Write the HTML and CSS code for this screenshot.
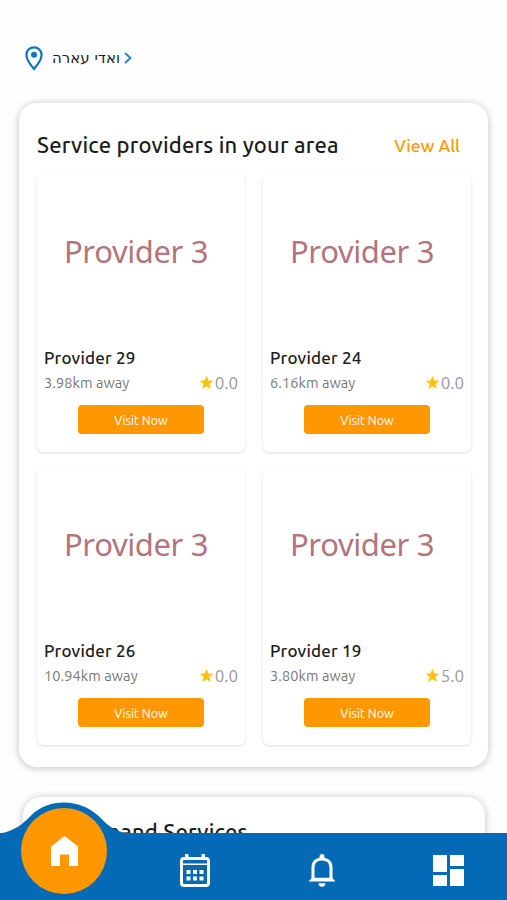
FILE: index.html
```html
<!DOCTYPE html>
<html lang="en">
<head>
<meta charset="UTF-8">
<meta name="viewport" content="width=device-width, initial-scale=1.0">
<title>Home</title>
<link rel="stylesheet" href="styles.css">
</head>
<body>
  <svg class="sprite" width="0" height="0">
    <symbol id="star" viewBox="0 0 24 24"><path d="M12 18 18.8 22.500l-2.200-8L23 9.200l-8-.5L12 1 9 8.700l-8 .5 6.400 5.300-2.200 8z"/></symbol>
  </svg>

  <header class="location">
    <svg class="pin" viewBox="0 0 18 25">
      <path d="M9 1.3C4.7 1.3 1.4 4.6 1.4 8.8 1.4 14.3 9 23 9 23s7.6-8.7 7.6-14.2c0-4.2-3.3-7.5-7.6-7.5z" fill="none" stroke="#0f75bd" stroke-width="2.2"/>
      <circle cx="9" cy="8.8" r="3" fill="#0f75bd"/>
    </svg>
    <span class="place" dir="rtl">ואדי עארה</span>
    <svg class="chevron" viewBox="0 0 8 12"><path d="M1 1l5.5 5L1 11" fill="none" stroke="#1d7fc4" stroke-width="1.7"/></svg>
  </header>

  <section class="panel">
    <div class="panel-head">
      <h2>Service providers in your area</h2>
      <a class="view-all" href="#">View All</a>
    </div>
    <div class="grid">
      <div class="card">
        <div class="photo"><span>Provider 3</span></div>
        <h3>Provider 29</h3>
        <div class="info">
          <span class="distance">3.98km away</span>
          <span class="rating"><svg class="star"><use href="#star"/></svg>0.0</span>
        </div>
        <button class="visit">Visit Now</button>
      </div>
      <div class="card">
        <div class="photo"><span>Provider 3</span></div>
        <h3>Provider 24</h3>
        <div class="info">
          <span class="distance">6.16km away</span>
          <span class="rating"><svg class="star"><use href="#star"/></svg>0.0</span>
        </div>
        <button class="visit">Visit Now</button>
      </div>
      <div class="card">
        <div class="photo"><span>Provider 3</span></div>
        <h3>Provider 26</h3>
        <div class="info">
          <span class="distance">10.94km away</span>
          <span class="rating"><svg class="star"><use href="#star"/></svg>0.0</span>
        </div>
        <button class="visit">Visit Now</button>
      </div>
      <div class="card">
        <div class="photo"><span>Provider 3</span></div>
        <h3>Provider 19</h3>
        <div class="info">
          <span class="distance">3.80km away</span>
          <span class="rating"><svg class="star"><use href="#star"/></svg>5.0</span>
        </div>
        <button class="visit">Visit Now</button>
      </div>
    </div>
  </section>

  <section class="panel demand">
    <h2>On Demand Services</h2>
  </section>

  <nav class="tabbar">
    <svg class="hump" viewBox="0 0 130 31"><path d="M0 31C16 28 23 21 31 13 40 4 51 0 64 0s25 5 34 13c9 9 17 17 32 18z" fill="#046ab5"/></svg>
    <a class="home" href="#">
      <svg viewBox="0 0 27 30"><path d="M0 10.5 13.5 0 27 10.5V30H18V18.5H9V30H0z" fill="#fff"/></svg>
    </a>
    <a class="tab" href="#">
      <svg width="30" height="33" viewBox="0 0 30 33">
        <rect x="1.500" y="4.500" width="27" height="27" rx="2.500" fill="none" stroke="#fff" stroke-width="3"/>
        <path d="M5 0h3.500v5H5zM21.500 0H25v5h-3.500zM2 9.500h26v1.500H2zM6.500 16h4v4h-4zM13 16h4v4h-4zM19.500 16h4v4h-4zM6.500 22.500h4v4h-4zM13 22.500h4v4h-4zM19.500 22.500h4v4h-4z" fill="#fff"/>
      </svg>
    </a>
    <a class="tab" href="#">
      <svg width="28" height="33" viewBox="0 0 28 33">
        <path d="M5 26V13.500C5 8 8.500 5 14 5s9 3 9 8.500V26" fill="none" stroke="#fff" stroke-width="3"/>
        <path d="M11.500 5V2.500a2.500 2.500 0 0 1 5 0V5zM.5 27.500 4 23.800h20l3.500 3.700zM10.500 29.200h7a3.500 3.500 0 0 1-7 0z" fill="#fff"/>
      </svg>
    </a>
    <a class="tab" href="#">
      <svg width="31" height="31" viewBox="0 0 31 31"><path d="M0 0h14v17H0zM17 0h14v11H17zM0 20h14v11H0zM17 14h14v17H17z" fill="#fff"/></svg>
    </a>
  </nav>
</body>
</html>
```
FILE: styles.css
```css
:root {
  --orange: #ff9800;
  --blue: #046ab5;
  --text: #1d1d1d;
}

* {
  box-sizing: border-box;
}

body {
  margin: 0;
  height: 900px;
  overflow: hidden;
  background: #fefefe;
  color: var(--text);
  font-family: "Ubuntu", "Noto Sans", "Open Sans", sans-serif;
}

.sprite {
  display: block;
}

.location {
  display: flex;
  align-items: center;
  height: 103px;
  padding: 13px 0 0 25px;
}

.pin {
  width: 18px;
  height: 25px;
}

.place {
  margin: 0 4px 0 9px;
  font-family: "DejaVu Sans", sans-serif;
  font-size: 15px;
}

.chevron {
  width: 8px;
  height: 12px;
}

.panel {
  height: 664px;
  margin: 0 19px;
  padding: 27px 17px 0 18px;
  border-radius: 18px;
  background: #fff;
  box-shadow: 0 1px 7px 1px rgba(0,0,0,0.2);
}

.panel-head {
  display: flex;
  justify-content: space-between;
  align-items: center;
  height: 30px;
  padding-right: 11px;
}

h2 {
  margin: 0;
  font-size: 22px;
  line-height: 30px;
  letter-spacing: 0.18px;
  font-weight: 500;
  white-space: nowrap;
}

.view-all {
  color: var(--orange);
  font-size: 17.5px;
  font-weight: 500;
  text-decoration: none;
}

.grid {
  display: grid;
  grid-template-columns: 1fr 1fr;
  grid-auto-rows: 277px;
  gap: 16px 18px;
  margin-top: 15px;
}

.card {
  padding: 0 7px;
  border-radius: 6px;
  background: #fff;
  box-shadow: 0 1px 3px rgba(0,0,0,0.14);
}

.photo {
  display: flex;
  justify-content: center;
  align-items: center;
  height: 152px;
  padding-right: 10px;
  color: #b3757a;
  font-family: "Noto Sans", sans-serif;
  font-size: 31px;
  line-height: 40px;
  letter-spacing: -0.4px;
}

h3 {
  margin: 19px 0 0;
  font-size: 17px;
  line-height: 24px;
  letter-spacing: 0.2px;
  font-weight: 500;
}

.info {
  display: flex;
  justify-content: space-between;
  align-items: center;
  height: 25px;
}

.distance {
  color: #777;
  font-size: 14.500px;
  letter-spacing: 0.1px;
}

.rating {
  display: flex;
  align-items: center;
  color: #999;
  font-size: 17px;
}

.star {
  width: 15px;
  height: 15px;
  margin-right: 1px;
  fill: #ffc107;
}

.visit {
  display: block;
  width: 126px;
  height: 29px;
  margin: 10px auto 0;
  padding: 0;
  border: none;
  border-radius: 4px;
  background: var(--orange);
  color: #fff;
  font-family: inherit;
  font-size: 12.500px;
}

.demand {
  height: 120px;
  margin: 30px 22px 0 23px;
  padding: 20px 14px 0;
}

.tabbar {
  position: fixed;
  left: 0;
  right: 0;
  bottom: 0;
  display: grid;
  grid-template-columns: 132px repeat(3, 126.500px);
  align-items: center;
  height: 67px;
  padding-top: 7px;
  background: var(--blue);
}

.hump {
  position: absolute;
  left: 0;
  top: -31px;
  width: 130px;
  height: 32px;
}

.home {
  position: absolute;
  left: 21px;
  top: -25px;
  display: flex;
  justify-content: center;
  align-items: center;
  width: 86px;
  height: 86px;
  border-radius: 50%;
  background: var(--orange);
}

.home svg {
  width: 27px;
  height: 30px;
}

.tab {
  display: flex;
  justify-content: center;
}

.tab:nth-of-type(2) {
  grid-column: 2;
}
```
